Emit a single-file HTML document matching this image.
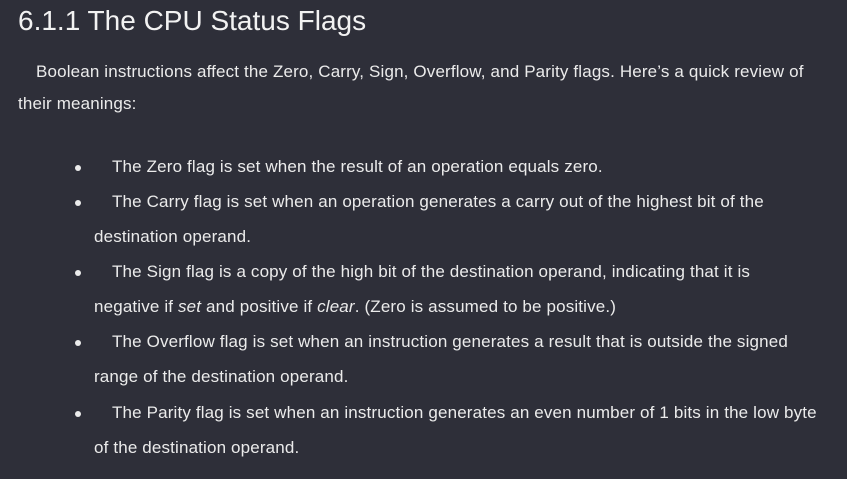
<!DOCTYPE html>
<html><head><style>
body{margin:0;width:847px;height:479px;background:#2e2f39;color:#ebebeb;font-family:"Liberation Sans",sans-serif;overflow:hidden;position:relative}
.l{position:absolute;white-space:nowrap;font-size:17px;line-height:20px;letter-spacing:0.15px}
h1{position:absolute;left:18px;top:3px;margin:0;font-weight:normal;font-size:28px;line-height:36px;letter-spacing:0px;color:#f2f2f2}
.b{position:absolute;left:75px;width:6px;height:6px;border-radius:50%;background:#ebebeb}
</style></head><body>
<h1>6.1.1 The CPU Status Flags</h1>
<div class="l" style="left:36px;top:62px">Boolean instructions affect the Zero, Carry, Sign, Overflow, and Parity flags. Here’s a quick review of</div>
<div class="l" style="left:18px;top:94px">their meanings:</div>
<div class="b" style="top:165px"></div>
<div class="l" style="left:112px;top:157px">The Zero flag is set when the result of an operation equals zero.</div>
<div class="b" style="top:200px"></div>
<div class="l" style="left:112px;top:192px">The Carry flag is set when an operation generates a carry out of the highest bit of the</div>
<div class="l" style="left:94px;top:227px">destination operand.</div>
<div class="b" style="top:270px"></div>
<div class="l" style="left:112px;top:262px">The Sign flag is a copy of the high bit of the destination operand, indicating that it is</div>
<div class="l" style="left:94px;top:297px">negative if <i>set</i> and positive if <i>clear</i>. (Zero is assumed to be positive.)</div>
<div class="b" style="top:340px"></div>
<div class="l" style="left:112px;top:332px">The Overflow flag is set when an instruction generates a result that is outside the signed</div>
<div class="l" style="left:94px;top:367px">range of the destination operand.</div>
<div class="b" style="top:411px"></div>
<div class="l" style="left:112px;top:403px">The Parity flag is set when an instruction generates an even number of 1 bits in the low byte</div>
<div class="l" style="left:94px;top:438px">of the destination operand.</div>
</body></html>
